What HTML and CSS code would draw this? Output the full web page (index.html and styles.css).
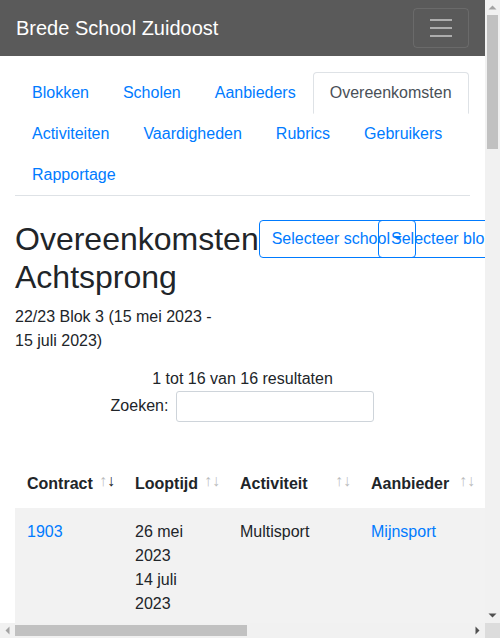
FILE: index.html
```html
<!DOCTYPE html>
<html lang="nl">
<head>
<meta charset="utf-8">
<title>Overeenkomsten</title>
<link rel="stylesheet" href="styles.css">
</head>
<body>
<div class="screen">
<div class="viewport">
<div class="page">
  <nav class="navbar">
    <a class="brand" href="#">Brede School Zuidoost</a>
    <button class="toggler" type="button" aria-label="Menu">
      <svg class="toggler-icon" width="30" height="30" viewBox="0 0 30 30"><path d="M4 7h22M4 15h22M4 23h22" stroke="rgba(255,255,255,0.5)" stroke-width="2" stroke-linecap="butt" fill="none"/></svg>
    </button>
  </nav>

  <div class="container">
    <ul class="tabs">
      <li class="tab"><a class="tab-link" href="#">Blokken</a></li>
      <li class="tab"><a class="tab-link" href="#">Scholen</a></li>
      <li class="tab"><a class="tab-link" href="#">Aanbieders</a></li>
      <li class="tab"><a class="tab-link active" href="#">Overeenkomsten</a></li>
      <li class="tab"><a class="tab-link" href="#">Activiteiten</a></li>
      <li class="tab"><a class="tab-link" href="#">Vaardigheden</a></li>
      <li class="tab"><a class="tab-link" href="#">Rubrics</a></li>
      <li class="tab"><a class="tab-link" href="#">Gebruikers</a></li>
      <li class="tab"><a class="tab-link" href="#">Rapportage</a></li>
    </ul>

    <div class="title-row">
      <h1 class="title">Overeenkomsten Achtsprong</h1>
      <div class="filters">
        <button class="btn dropdown-toggle" type="button">Selecteer school</button>
        <button class="btn dropdown-toggle btn-overlap" type="button">Selecteer blok</button>
      </div>
    </div>
    <p class="period">22/23 Blok 3 (15 mei 2023 - 15 juli 2023)</p>

    <div class="info">1 tot 16 van 16 resultaten</div>
    <div class="search">
      <label class="search-label" for="q">Zoeken:</label>
      <input class="search-input" id="q" type="search">
    </div>

    <table class="data">
      <colgroup>
        <col class="c-contract">
        <col class="c-looptijd">
        <col class="c-activiteit">
        <col class="c-aanbieder">
        <col>
      </colgroup>
      <thead>
        <tr>
          <th class="sorting desc">Contract</th>
          <th class="sorting">Looptijd</th>
          <th class="sorting">Activiteit</th>
          <th class="sorting">Aanbieder</th>
          <th class="plain"></th>
        </tr>
      </thead>
      <tbody>
        <tr class="odd">
          <td><a href="#">1903</a></td>
          <td>26 mei 2023<br>14 juli 2023</td>
          <td>Multisport</td>
          <td><a href="#">Mijnsport</a></td>
          <td></td>
        </tr>
      </tbody>
    </table>
  </div>
</div>
</div>

<div class="vbar">
  <svg class="sb-btn" width="15" height="15" viewBox="0 0 15 15"><polygon points="3.5,9.5 11.5,9.5 7.5,5.5" fill="#a3a3a3"/></svg>
  <div class="vtrack"><div class="vthumb"></div></div>
  <svg class="sb-btn" width="15" height="15" viewBox="0 0 15 15"><polygon points="3.5,5.5 11.5,5.5 7.5,9.5" fill="#505050"/></svg>
</div>
<div class="hbar">
  <svg class="sb-btn" width="15" height="15" viewBox="0 0 15 15"><polygon points="5.5,7.5 9.5,3.5 9.5,11.5" fill="#a3a3a3"/></svg>
  <div class="htrack"><div class="hthumb"></div></div>
  <svg class="sb-btn" width="15" height="15" viewBox="0 0 15 15"><polygon points="9.5,7.5 5.5,3.5 5.5,11.5" fill="#505050"/></svg>
</div>
<div class="corner"></div>
</div>
</body>
</html>
```

FILE: styles.css
```css
* { box-sizing: border-box; }

html, body {
  margin: 0;
  padding: 0;
  overflow: hidden;
}

body {
  font-family: "Liberation Sans", Arial, sans-serif;
  font-size: 16px;
  line-height: 1.5;
  color: #212529;
  background: #fff;
}

a {
  color: #007bff;
  text-decoration: none;
}

/* Window frame with scrollbars */
.screen {
  display: grid;
  grid-template-columns: 485px 15px;
  grid-template-rows: 623px 15px;
  width: 500px;
  height: 638px;
}

.viewport {
  overflow: hidden;
  background: #fff;
}

.vbar {
  display: flex;
  flex-direction: column;
  background: #f1f1f1;
}

.hbar {
  display: flex;
  background: #f1f1f1;
}

.corner {
  background: #dcdcdc;
}

.sb-btn {
  display: block;
  flex: none;
}

.vtrack {
  flex: 1;
  padding: 0 2px;
}

.vthumb {
  height: 134px;
  background: #c1c1c1;
}

.htrack {
  flex: 1;
  padding: 2px 0;
}

.hthumb {
  width: 232px;
  height: 11px;
  background: #c1c1c1;
}

.page {
  min-height: 2757px;
}

/* Navbar */
.navbar {
  display: flex;
  align-items: center;
  justify-content: space-between;
  height: 56px;
  padding: 8px 16px;
  background: #5a5a5a;
}

.brand {
  color: #fff;
  font-size: 20px;
  line-height: 30px;
}

.toggler {
  width: 56px;
  height: 40px;
  padding: 4px 12px;
  background: transparent;
  border: 1px solid rgba(255, 255, 255, 0.1);
  border-radius: 4px;
  display: flex;
  align-items: center;
  justify-content: center;
}

.toggler-icon { display: block; }

/* Container */
.container {
  padding: 0 15px;
}

/* Tabs */
.tabs {
  display: flex;
  flex-wrap: wrap;
  list-style: none;
  margin: 16px 0 0;
  padding: 0;
  border-bottom: 1px solid #dee2e6;
}

.tab {
  margin-bottom: -1px;
}

.tab-link {
  display: block;
  padding: 8px 16px;
  border: 1px solid transparent;
  border-radius: 4px 4px 0 0;
  color: #007bff;
}

.tab-link.active {
  color: #495057;
  background: #fff;
  border-color: #dee2e6 #dee2e6 #fff;
}

/* Title */
.title-row {
  display: flex;
  align-items: flex-start;
  margin-top: 24px;
}

.title {
  flex: 0 1 auto;
  margin: 0 0 8px;
  font-size: 32px;
  font-weight: 500;
  line-height: 1.2;
}

.filters {
  display: flex;
  flex: none;
}

.btn {
  display: inline-block;
  font-family: inherit;
  font-size: 16px;
  line-height: 1.5;
  padding: 6px 13px 6px 12px;
  color: #007bff;
  background: transparent;
  border: 1px solid #007bff;
  border-radius: 4px;
  white-space: nowrap;
}

.btn-overlap {
  margin-left: -38px;
}

.dropdown-toggle::after {
  content: "";
  display: inline-block;
  margin-left: 0.255em;
  vertical-align: 0.255em;
  border-top: 0.3em solid;
  border-right: 0.3em solid transparent;
  border-left: 0.3em solid transparent;
  border-bottom: 0;
}

.period {
  max-width: 210px;
  margin: 0 0 14px;
}

/* Info + search */
.info {
  text-align: center;
}

.search {
  display: flex;
  justify-content: center;
  align-items: center;
}

.search-label {
  margin-right: 8px;
}

.search-input {
  width: 198px;
  height: 31px;
  padding: 4px 8px;
  font-size: 14px;
  border: 1px solid #ced4da;
  border-radius: 3px;
  background: #fff;
}

/* Table */
.data {
  width: 937px;
  table-layout: fixed;
  border-collapse: separate;
  border-spacing: 0;
  margin-top: 38px;
}

.c-contract { width: 108px; }
.c-looptijd { width: 105px; }
.c-activiteit { width: 131px; }
.c-aanbieder { width: 124px; }

.data th {
  position: relative;
  text-align: left;
  vertical-align: bottom;
  font-weight: bold;
  padding: 12px 30px 12px 12px;
}

.data th.sorting::before,
.data th.sorting::after {
  position: absolute;
  bottom: 0.9em;
  display: block;
  opacity: 0.3;
}

.data th.sorting::before {
  right: 1em;
  content: "\2191";
}

.data th.sorting::after {
  right: 0.5em;
  content: "\2193";
}

.data th.desc::after {
  opacity: 1;
}

.data td {
  padding: 12px;
  vertical-align: top;
}

.data tbody tr.odd {
  background: #f2f2f2;
}
```
